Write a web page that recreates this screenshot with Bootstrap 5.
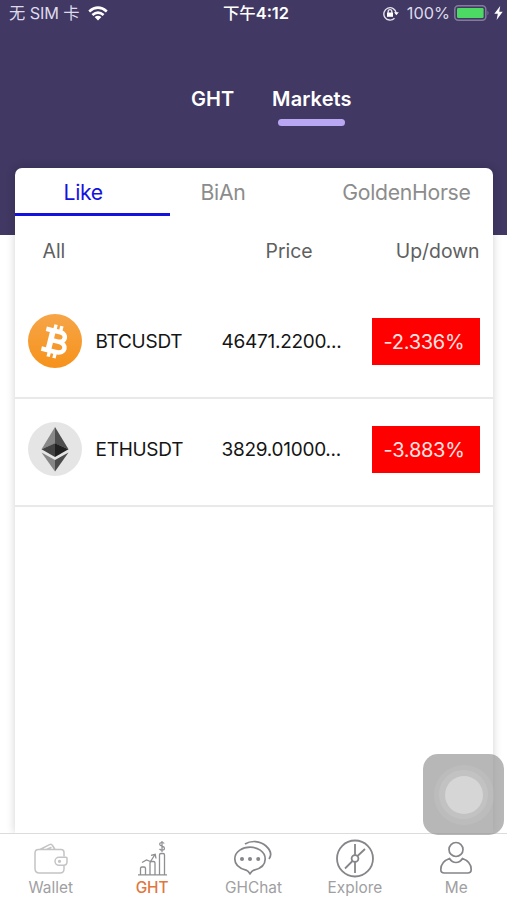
<!DOCTYPE html>
<html lang="en">
<head>
<meta charset="utf-8">
<meta name="viewport" content="width=device-width, initial-scale=1">
<title>Markets</title>
<link href="https://cdn.jsdelivr.net/npm/bootstrap@5.3.0/dist/css/bootstrap.min.css" rel="stylesheet">
<style>
body{font-family:Inter,"Noto Sans CJK SC",sans-serif;background:#fff;line-height:1}
.screen{height:900px;overflow:hidden}
svg{display:block;flex:none}
.hero{height:235px;background:#413863;color:#fff}
.status{height:27px;padding:0 4px 0 9px;font-size:16.3px;color:#dedbea}
.status>div{width:33.333%}
.status .sim{letter-spacing:-.1px}
.clock{color:#fff;font-weight:600;font-size:16.4px}
.clock span{font-weight:500}
.switcher{padding:61px 0 0 191px;gap:38px;font-size:20px;font-weight:600}
.switcher span{height:38px;line-height:22px}
.bar-on{letter-spacing:.1px}
.bar-on::after{content:"";display:block;width:67px;height:7px;margin:9px auto 0;border-radius:4px;background:#b9a7f3}
.sheet{width:478px;height:665px;margin:-67px auto 0;border:0;border-radius:7px 7px 0 0;box-shadow:0 0 10px rgba(0,0,0,.18);position:relative}
.tabs{height:48px;font-size:21.2px;letter-spacing:-.3px;color:#8c8c8c;line-height:48px}
.tab-like{width:155px;padding-left:49px;color:#1512e0;border-bottom:3px solid #1512e0}
.tab-bian{padding-left:31px}
.tab-gold{padding-right:22px}
.heads{height:72px;font-size:19.4px;color:#606060;line-height:71px;padding:0 13px 0 28px}
.h-all{width:223px}
.coin{height:108px;border-bottom:2px solid #e9e9e9;padding:0 13px 6px;font-size:19px;letter-spacing:-.27px;color:#151515}
.coin-first{height:111px;padding-bottom:3px}
.coin svg{margin-right:14px}
.pair{width:126px}
.change{width:108px;height:47px;background:#f00;color:#ffe3e3;padding-left:12px;line-height:48px;font-size:20px}
.tabbar{height:67px;border-top:1px solid #dcdcdc;background:#fff;color:#a0a0a2;font-size:15.4px}
.tabbar>div{width:20%;padding-top:5px}
.tabbar svg{margin-bottom:1px}
.tabbar .on{color:#e1763e}
.on span{letter-spacing:-.1px;font-weight:500}
.assist{position:absolute;left:423px;top:754px;width:81px;height:81px;border-radius:15px;background:rgba(145,145,145,.65);z-index:5}
.assist i{border-radius:50%;display:flex;align-items:center;justify-content:center}
.r1{width:60px;height:60px;background:rgba(255,255,255,.08)}
.r2{width:49px;height:49px;background:rgba(255,255,255,.1)}
.r3{width:38px;height:38px;background:rgba(225,225,225,.65)}
</style>
</head>
<body>
<main class="screen position-relative d-flex flex-column">
<header class="hero">
 <div class="status d-flex align-items-center">
  <div class="d-flex align-items-center"><span class="sim text-nowrap">无 SIM 卡</span>
   <svg class="ms-2" width="20" height="15" viewBox="0 0 20 15" fill="none" stroke="#fff" stroke-width="2.6"><path d="M1.2 5.4Q10-2.2 18.800 5.400M4.400 9Q10 4.100 15.600 9"/><path d="M10 14.400 6.600 11Q10 8.300 13.400 11Z" fill="#fff" stroke="none"/></svg></div>
  <div class="clock text-center text-nowrap"><span>下午</span>4:12</div>
  <div class="d-flex align-items-center justify-content-end text-nowrap">
   <svg width="16" height="15" viewBox="0 0 16 15" fill="none" stroke="#e4e1ed" stroke-width="1.4"><path d="M11.500 12.200A6.200 6.200 0 1 1 13.200 7"/><path d="M11 6.200h4.800L13.400 9.300Z" fill="#fff" stroke="none"/><rect x="4" y="6.500" width="6" height="4.300" fill="#fff" stroke="none"/><path d="M5.200 7V5.400a1.800 1.800 0 0 1 3.600 0V7"/></svg>
   <span class="ms-2 me-1">100%</span>
   <svg width="36" height="16" viewBox="0 0 36 16"><rect x=".8" y=".8" width="31" height="14.400" rx="3.500" fill="none" stroke="#827b9a" stroke-width="1.500"/><rect x="3" y="3" width="26.600" height="10" rx="1.200" fill="#4cda64"/><path d="M33.500 5.500q2 2.500 0 5Z" fill="#827b9a"/></svg>
   <svg class="ms-1" width="9" height="14" viewBox="0 0 9 14"><path d="M6.200 0 .3 7.700h3.500L2.600 14 8.700 5.800H5.200Z" fill="#fff"/></svg>
  </div>
 </div>
 <div class="switcher d-flex"><span>GHT</span><span class="bar-on">Markets</span></div>
</header>
<section class="sheet card">
 <div class="tabs d-flex"><div class="tab-like">Like</div><div class="tab-bian">BiAn</div><div class="tab-gold ms-auto">GoldenHorse</div></div>
 <div class="heads d-flex"><span class="h-all">All</span><span>Price</span><span class="ms-auto">Up/down</span></div>
 <div class="coin coin-first d-flex align-items-center">
  <svg width="54" height="54" viewBox="0 0 54 54"><defs><linearGradient id="g" x2="0" y2="1"><stop stop-color="#f6a548"/><stop offset="1" stop-color="#f6921a"/></linearGradient></defs><circle cx="27" cy="27" r="27" fill="url(#g)"/><g transform="translate(27.500 27.500) rotate(14)" fill="none" stroke="#fff"><path d="M-12-10.200H2.500C10-10.200 10-.5 2.500-.5H-4.500M2.500-.5C13-.5 13 10.200 2.500 10.200H-12" stroke-width="4.600"/><path d="M-5-10V10" stroke-width="5.600"/><path d="M-3.500-16.500v6M2.500-16.500v6M-3.500 10.500v6M2.500 10.500v6" stroke-width="3.400"/></g></svg>
  <span class="pair">BTCUSDT</span><span>46471.2200...</span><span class="change ms-auto">-2.336%</span></div>
 <div class="coin d-flex align-items-center">
  <svg width="54" height="54" viewBox="0 0 54 54"><circle cx="27" cy="27" r="27" fill="#e5e5e5"/><path d="M27 5 13.500 27.200 27 21.500Z" fill="#888"/><path d="M27 5v16.500l13.500 5.700Z" fill="#4e4e4e"/><path d="m27 21.300-13.500 5.900L27 35Z" fill="#424242"/><path d="m27 21.300 13.500 5.900L27 35Z" fill="#202020"/><path d="M13.500 30.500 27 38v11.500Z" fill="#858585"/><path d="M40.500 30.500 27 38v11.500Z" fill="#4b4b4b"/></svg>
  <span class="pair">ETHUSDT</span><span>3829.01000...</span><span class="change ms-auto">-3.883%</span></div>
</section>
<nav class="tabbar d-flex position-relative text-center">
 <div class="d-flex flex-column align-items-center"><svg width="40" height="40" viewBox="0 0 40 40" fill="none" stroke="#c4c4c6" stroke-width="1.500"><path d="M33 17.500V13.500q0-3-3-3H7.500Q4 10.500 4 14V29.500Q4 34 8.500 34H29q4 0 4-4v-3.500M9 10.500 18.500 5.600q2-.9 3 .9l2.500 4M15.500 10.500l5-2.300"/><path d="M35 18.300h-7a4 4 0 0 0 0 8h4.500q3.500 0 3.500-3.500V19.300q0-1-1-1Z"/><circle cx="28.500" cy="22.300" r=".9"/></svg><span>Wallet</span></div>
 <div class="d-flex flex-column align-items-center on"><svg width="40" height="40" viewBox="0 0 40 40" fill="none" stroke="#8e8e93" stroke-width="1.300"><path d="M6 35.800h29M8.500 35.500v-6q0-1.500 1.500-1.500h2q1.500 0 1.500 1.500v6M18 35.500V24q0-1.500 1.500-1.500h2q1.500 0 1.500 1.500v11.500M27.500 35.500V16q0-1.500 1.500-1.500h2q1.500 0 1.500 1.500v19.500"/><path d="m10 23.500 4.500-2.500 4 1.500L23 15.500m-4 .8 4.200-1 .8 4.200"/><path d="M32.200 4.500Q31.500 3.500 30 3.500q-2.300 0-2.300 1.800c0 2.500 4.800 1.200 4.800 4q0 1.900-2.500 1.900-1.700 0-2.500-1.300M30 2v11" stroke-width="1.200"/></svg><span>GHT</span></div>
 <div class="d-flex flex-column align-items-center"><svg width="40" height="40" viewBox="0 0 40 40" fill="none" stroke="#85858a" stroke-width="1.700"><path d="M17 8.200C10 8.200 1.800 12 1.800 20c0 6 5 9.500 11.200 11.100q2.200 1 4 3.700 1.800-2.700 4-3.700C28 29.500 32.200 26 32.200 20c0-8-8.200-11.800-15.200-11.800Z"/><path d="M12 5C18 1.300 27 1.500 33 7q7.500 7 3 13"/><g fill="#85858a" stroke="none"><circle cx="9" cy="20" r="2"/><circle cx="17" cy="20" r="2"/><circle cx="25.200" cy="20" r="2"/></g></svg><span>GHChat</span></div>
 <div class="d-flex flex-column align-items-center"><svg width="40" height="40" viewBox="0 0 40 40" fill="none" stroke="#85858a" stroke-width="1.800"><circle cx="20" cy="19.500" r="18"/><circle cx="20" cy="19.500" r="3.400"/><path d="M20 5v11M20 23v11M22.500 17l7.500-7M17.500 22 10 29.500"/></svg><span>Explore</span></div>
 <div class="d-flex flex-column align-items-center"><svg width="40" height="40" viewBox="0 0 40 40" fill="none" stroke="#85858a" stroke-width="1.700"><circle cx="20" cy="10.500" r="7"/><path d="M13.500 19.500C8 21.500 4.800 26 4.800 30.500q0 3.500 3.500 3.500h23.400q3.500 0 3.500-3.500c0-4.500-3.200-9-8.700-11q-2.500 4-6.500 4t-6.500-4Z"/></svg><span>Me</span></div>
</nav>
<div class="assist d-flex align-items-center justify-content-center"><i class="r1"><i class="r2"><i class="r3"></i></i></i></div>
</main>
<script src="https://cdn.jsdelivr.net/npm/bootstrap@5.3.0/dist/js/bootstrap.bundle.min.js"></script>
</body>
</html>
